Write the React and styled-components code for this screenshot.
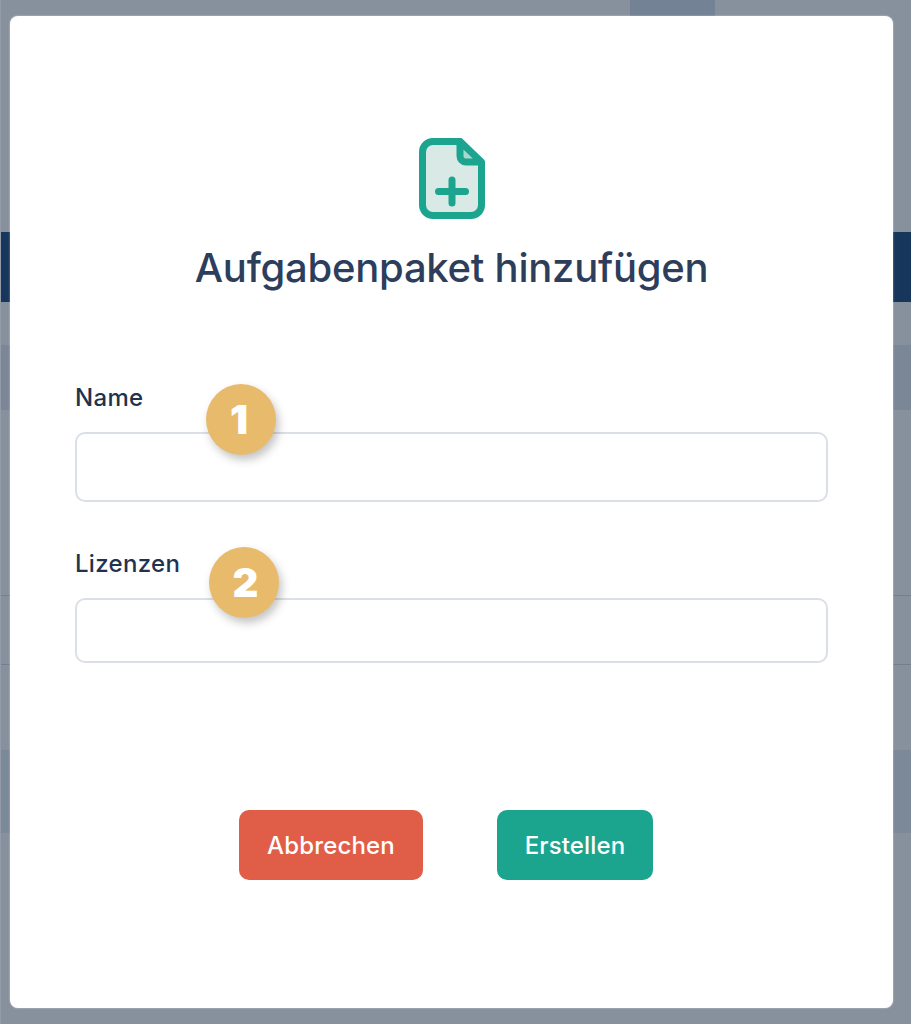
import React from 'react'
import styled, { createGlobalStyle } from 'styled-components'

const GlobalStyle = createGlobalStyle`
    html, body {
    margin: 0;
    padding: 0;
    background: #87919e;
    }
    * {
    box-sizing: border-box;
    }
`

const Page = styled.div`
    display: grid;
    width: 911px;
    height: 1024px;
    overflow: hidden;
    font-family: "Inter", "Noto Sans", sans-serif;
`

const Backdrop = styled.div`
    grid-area: 1 / 1;
    display: flex;
    flex-direction: column;
    background: #87919e;
    border-left: 1px solid #929ba7;
`

const Band = styled.div`
    height: ${(p) => p.$height}px;
    margin-top: ${(p) => p.$top || 0}px;
    background: ${(p) => p.$color};
    flex-shrink: 0;
`

const TopTab = styled.div`
    width: 85px;
    height: 16px;
    margin-left: 629px;
    background: #748296;
`

const Card = styled.section`
    grid-area: 1 / 1;
    width: 883px;
    height: 992px;
    margin: 16px 0 0 10px;
    padding: 122px 65px 0 65px;
    background: #fff;
    border-radius: 8px;
    box-shadow: 0 0 2px rgba(255, 255, 255, 0.6);
    display: flex;
    flex-direction: column;
`

const FileIcon = styled.svg`
    display: block;
    width: 66px;
    height: 81px;
    margin: 0 auto;
    flex-shrink: 0;
`

const Title = styled.h2`
    margin: 27px 0 0;
    font-size: 40px;
    line-height: 44px;
    font-weight: 500;
    letter-spacing: -0.25px;
    color: #2c3e5c;
    text-align: center;
`

const Field = styled.div`
    position: relative;
    margin-top: ${(p) => p.$top}px;
`

const Label = styled.label`
    display: block;
    margin-bottom: 22px;
    font-size: 24px;
    line-height: 24px;
    font-weight: 500;
    letter-spacing: 0.3px;
    color: #1f3350;
`

const Input = styled.input`
    display: block;
    width: 100%;
    height: ${(p) => p.$height}px;
    padding: 0 16px;
    background: #fff;
    border: 2px solid #dbe0e6;
    border-radius: 10px;
    outline: none;
`

const Badge = styled.span`
    position: absolute;
    left: ${(p) => p.$left}px;
    top: ${(p) => p.$top}px;
    width: 70px;
    height: 71px;
    padding: ${(p) => p.$pad};
    display: flex;
    align-items: center;
    justify-content: center;
    border-radius: 50%;
    background: #e8bb6c;
    box-shadow: 3px 5px 9px rgba(60, 60, 60, 0.3);
    color: #fff;
    font-size: 40px;
    font-weight: 900;
`

const Actions = styled.div`
    display: flex;
    justify-content: center;
    gap: 74px;
    margin-top: 147px;
    padding-right: 11px;
`

const Button = styled.button`
    width: ${(p) => p.$width}px;
    height: 70px;
    padding: 0;
    border: 0;
    border-radius: 10px;
    background: ${(p) => p.$color};
    color: #fff;
    font-family: inherit;
    font-size: 24px;
    font-weight: 500;
    letter-spacing: 0.15px;
`

function AddFileIcon() {
    return (
        <FileIcon viewBox="0 0 66 81">
            <path
                d="M14 3.500H41L62.500 25V67a10.500 10.500 0 0 1-10.500 10.500H14A10.500 10.500 0 0 1 3.500 67V14A10.500 10.500 0 0 1 14 3.500Z"
                fill="#d8e9e6"
                stroke="#1ba58f"
                strokeWidth="7"
                strokeLinejoin="round"
            />
            <path
                d="M41 3.500V18a6 6 0 0 0 6 6H62.500Z"
                fill="#a9d8ce"
                stroke="#1ba58f"
                strokeWidth="7"
                strokeLinejoin="round"
            />
            <path
                d="M33 42V65M19.500 53.500H46.500"
                fill="none"
                stroke="#1ba58f"
                strokeWidth="7"
                strokeLinecap="round"
            />
        </FileIcon>
    )
}

export default function App() {
    return (
        <Page>
            <GlobalStyle />
            <Backdrop>
                <TopTab />
                <Band $top={216} $height={70} $color="#17365b" />
                <Band $top={43} $height={65} $color="#7b8797" />
                <Band $top={185} $height={1} $color="#747f8e" />
                <Band $top={68} $height={1} $color="#747f8e" />
                <Band $top={85} $height={83} $color="#7c8999" />
            </Backdrop>
            <Card>
                <AddFileIcon />
                <Title>Aufgabenpaket hinzufügen</Title>
                <Field $top={96}>
                    <Label>Name</Label>
                    <Input $height={70} />
                    <Badge $left={131} $top={-2} $pad="0 4px 0 0">1</Badge>
                </Field>
                <Field $top={50}>
                    <Label>Lizenzen</Label>
                    <Input $height={65} />
                    <Badge $left={134} $top={-5} $pad="0 0 0 3px">2</Badge>
                </Field>
                <Actions>
                    <Button $width={184} $color="#e05d48">Abbrechen</Button>
                    <Button $width={156} $color="#1ba58f">Erstellen</Button>
                </Actions>
            </Card>
        </Page>
    )
}
